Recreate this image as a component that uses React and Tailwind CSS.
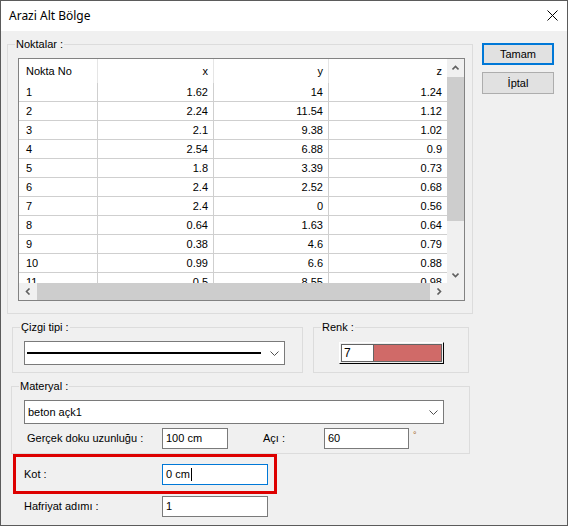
import React from "react";

const rows = [
  ["1", "1.62", "14", "1.24"],
  ["2", "2.24", "11.54", "1.12"],
  ["3", "2.1", "9.38", "1.02"],
  ["4", "2.54", "6.88", "0.9"],
  ["5", "1.8", "3.39", "0.73"],
  ["6", "2.4", "2.52", "0.68"],
  ["7", "2.4", "0", "0.56"],
  ["8", "0.64", "1.63", "0.64"],
  ["9", "0.38", "4.6", "0.79"],
  ["10", "0.99", "6.6", "0.88"],
  ["11", "0.5", "8.55", "0.98"],
];

const Arrow = ({ dir }) => {
  const pts = {
    up: "0.5,4.5 3.5,1.5 6.5,4.5",
    down: "0.5,1.5 3.5,4.5 6.5,1.5",
    left: "4.5,0.5 1.5,3.5 4.5,6.5",
    right: "1.5,0.5 4.5,3.5 1.5,6.5",
  }[dir];
  const vert = dir === "up" || dir === "down";
  return (
    <svg width={vert ? 7 : 6} height={vert ? 6 : 7} viewBox={vert ? "0 0 7 6" : "0 0 6 7"}>
      <polyline points={pts} fill="none" stroke="#606060" strokeWidth="1.6" />
    </svg>
  );
};

const Chevron = () => (
  <svg width="9" height="5" viewBox="0 0 9 5">
    <polyline points="0.5,0.5 4.5,4.5 8.5,0.5" fill="none" stroke="#505050" strokeWidth="1" />
  </svg>
);

function Group({ label, className, children }) {
  return (
    <div className={`relative border border-[#dcdcdc] ${className}`}>
      <span className="absolute left-[7px] top-[-8px] bg-[#f0f0f0] px-[1px] leading-[14px]">{label}</span>
      {children}
    </div>
  );
}

function Input({ value, w, focus }) {
  return (
    <div
      className={`flex h-[21px] items-center bg-white pl-[3px] ${w} border ${
        focus ? "border-[#0078d7]" : "border-[#7a7a7a]"
      }`}
    >
      {value}
      {focus && <span className="ml-[1px] h-[13px] w-[1px] bg-black" />}
    </div>
  );
}

export default function App() {
  return (
    <div
      className="flex h-[526px] w-[568px] flex-col overflow-hidden border border-[#5b5b5b] bg-[#f0f0f0] text-[11px] text-black"
      style={{ fontFamily: '"Liberation Sans", Arial, sans-serif' }}
    >
      {/* title bar */}
      <div className="flex h-[30px] shrink-0 items-center justify-between bg-white pl-[8px] pr-[9px]">
        <span className="text-[12px]" style={{ fontFamily: '"Noto Sans", "Open Sans", sans-serif' }}>
          Arazi Alt Bölge
        </span>
        <svg width="11" height="11" viewBox="0 0 11 11" className="mb-[1px]">
          <path d="M0.5 0.5 L10.5 10.5 M10.5 0.5 L0.5 10.5" stroke="#000" strokeWidth="1" />
        </svg>
      </div>

      {/* top row */}
      <div className="flex items-start gap-[9px] pl-[6px] pt-[12px]">
        <Group label="Noktalar :" className="mt-[1px] h-[270px] w-[466px] pl-[10px] pt-[13px]">
          <div className="flex h-[243px] w-[447px] flex-col border border-[#828282] bg-white">
            <div className="flex h-[224px]">
              <div className="w-[428px] overflow-hidden">
                <div className="flex h-[24px]">
                  <div className="flex w-[79px] items-center border-r border-[#e5e5e5] pl-[7px]">Nokta No</div>
                  <div className="flex w-[116px] items-center justify-end border-r border-[#e5e5e5] pr-[5px]">x</div>
                  <div className="flex w-[115px] items-center justify-end border-r border-[#e5e5e5] pr-[5px]">y</div>
                  <div className="flex w-[118px] items-center justify-end pr-[5px]">z</div>
                </div>
                {rows.map((r) => (
                  <div key={r[0]} className="flex h-[19px] border-b border-[#cfcfcf]">
                    <div className="flex w-[79px] items-center border-r border-[#cfcfcf] pl-[7px]">{r[0]}</div>
                    <div className="flex w-[116px] items-center justify-end border-r border-[#cfcfcf] pr-[5px]">{r[1]}</div>
                    <div className="flex w-[115px] items-center justify-end border-r border-[#cfcfcf] pr-[5px]">{r[2]}</div>
                    <div className="flex w-[118px] items-center justify-end pr-[5px]">{r[3]}</div>
                  </div>
                ))}
              </div>
              {/* vertical scrollbar */}
              <div className="flex w-[17px] flex-col bg-[#f0f0f0]">
                <div className="flex h-[17px] items-center justify-center">
                  <Arrow dir="up" />
                </div>
                <div className="mt-[1px] h-[144px] bg-[#cdcdcd]" />
                <div className="flex-1" />
                <div className="flex h-[17px] items-center justify-center">
                  <Arrow dir="down" />
                </div>
              </div>
            </div>
            {/* horizontal scrollbar */}
            <div className="flex h-[17px]">
              <div className="flex w-[428px] bg-[#f0f0f0]">
                <div className="flex w-[17px] items-center justify-center">
                  <Arrow dir="left" />
                </div>
                <div className="ml-[1px] w-[393px] bg-[#cdcdcd]" />
                <div className="flex flex-1 items-center justify-center">
                  <Arrow dir="right" />
                </div>
              </div>
              <div className="w-[17px] bg-[#f0f0f0]" />
            </div>
          </div>
        </Group>

        <div className="flex flex-col gap-[7px]">
          <button className="h-[22px] w-[72px] border-2 border-[#0078d7] bg-[#e1e1e1] text-[11px]">Tamam</button>
          <button className="h-[22px] w-[72px] border border-[#adadad] bg-[#e1e1e1] text-[11px]">İptal</button>
        </div>
      </div>

      {/* çizgi / renk */}
      <div className="mt-[13px] flex gap-[10px] pl-[11px]">
        <Group label="Çizgi tipi :" className="h-[46px] w-[291px] pl-[11px] pt-[13px]">
          <div className="flex h-[24px] w-[261px] items-center border border-[#7a7a7a] bg-white pl-[2px] pr-[5px]">
            <div className="h-[2px] w-[234px] bg-black" />
            <div className="flex-1" />
            <Chevron />
          </div>
        </Group>
        <Group label="Renk :" className="h-[46px] w-[156px] pl-[25px] pt-[14px]">
          <div className="flex h-[22px] w-[105px] border border-b-black border-l-white border-r-black border-t-white p-[1px]">
            <div className="flex flex-1 border border-[#646464]">
              <div className="flex w-[31px] items-center bg-white pl-[2px] text-[12px] leading-none">7</div>
              <div className="flex-1 border-l border-[#646464] bg-[#d06a68]" />
            </div>
          </div>
        </Group>
      </div>

      {/* materyal */}
      <div className="mt-[13px] pl-[10px]">
        <Group label="Materyal :" className="h-[68px] w-[459px] pl-[12px] pt-[13px]">
          <div className="flex h-[24px] w-[420px] items-center justify-between border border-[#7a7a7a] bg-white pl-[3px] pr-[5px]">
            <span>beton açk1</span>
            <Chevron />
          </div>
          <div className="mt-[4px] flex items-center">
            <div className="w-[138px] pl-[3px]">Gerçek doku uzunluğu :</div>
            <Input value="100 cm" w="w-[66px]" />
            <div className="ml-[35px] w-[61px]">Açı :</div>
            <Input value="60" w="w-[85px]" />
            <span className="mb-[6px] ml-[4px] text-[9px] text-[#a06020]">°</span>
          </div>
        </Group>
      </div>

      {/* kot */}
      <div className="pl-[12px]">
        <div className="flex h-[40px] w-[264px] items-center border-[3px] border-[#dd0000]">
          <div className="w-[146px] pl-[8px]">Kot :</div>
          <Input value="0 cm" w="w-[106px]" focus />
        </div>
      </div>

      {/* hafriyat */}
      <div className="mt-[2px] flex items-center pl-[23px]">
        <div className="w-[138px]">Hafriyat adımı :</div>
        <Input value="1" w="w-[106px]" />
      </div>
    </div>
  );
}
